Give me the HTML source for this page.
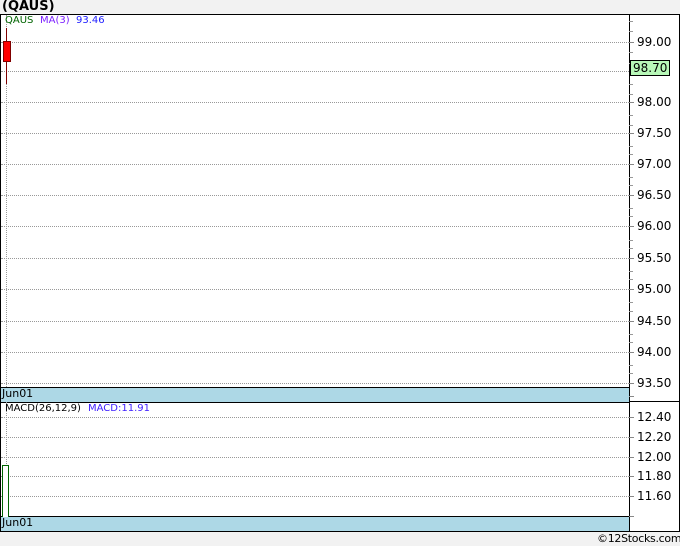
<!DOCTYPE html>
<html><head><style>
body{margin:0;width:680px;height:546px;background:#f2f2f2;position:relative;overflow:hidden;font-family:"DejaVu Sans","Liberation Sans",sans-serif;}
.a{position:absolute}
.t{position:absolute;font-size:11px;color:#000;line-height:12px}
.g{position:absolute;left:1px;width:628px;border-top:1px dotted #999;height:0}
.tk{position:absolute;left:629px;width:5px;height:1px;background:#888}
.m{position:absolute;left:629px;width:4px;height:1px;background:#999}
.y{position:absolute;left:637px;font-size:12px;line-height:12px;color:#000}
</style></head><body>
<div class="t" style="left:2px;top:0px;font-size:13px;font-weight:bold;line-height:14px">(QAUS)</div>
<div class="a" style="left:0;top:14px;width:678px;height:516px;border:1px solid #000;background:#fff"></div>
<div class="a" style="left:629px;top:14px;width:1px;height:518px;background:#000"></div>
<div class="a" style="left:1px;top:387px;width:628px;height:14px;background:#add8e6;border-top:1px solid #000;border-bottom:1px solid #000"></div>
<div class="a" style="left:629px;top:401px;width:50px;height:1px;background:#000"></div>
<div class="a" style="left:1px;top:516px;width:628px;height:14px;background:#add8e6;border-top:1px solid #000"></div>
<div class="t" style="left:2px;top:388px">Jun01</div>
<div class="t" style="left:2px;top:517px">Jun01</div>
<div class="a" style="left:6px;top:15px;width:0;height:372px;border-left:1px dotted #999"></div>
<div class="a" style="left:6px;top:402px;width:0;height:114px;border-left:1px dotted #999"></div>

<div class="g" style="top:42px"></div><div class="tk" style="top:42px"></div><div class="y" style="top:36px">99.00</div>
<div class="g" style="top:71px"></div>
<div class="g" style="top:102px"></div><div class="tk" style="top:102px"></div><div class="y" style="top:96px">98.00</div>
<div class="g" style="top:133px"></div><div class="tk" style="top:133px"></div><div class="y" style="top:127px">97.50</div>
<div class="g" style="top:164px"></div><div class="tk" style="top:164px"></div><div class="y" style="top:158px">97.00</div>
<div class="g" style="top:195px"></div><div class="tk" style="top:195px"></div><div class="y" style="top:189px">96.50</div>
<div class="g" style="top:226px"></div><div class="tk" style="top:226px"></div><div class="y" style="top:220px">96.00</div>
<div class="g" style="top:258px"></div><div class="tk" style="top:258px"></div><div class="y" style="top:252px">95.50</div>
<div class="g" style="top:289px"></div><div class="tk" style="top:289px"></div><div class="y" style="top:283px">95.00</div>
<div class="g" style="top:321px"></div><div class="tk" style="top:321px"></div><div class="y" style="top:315px">94.50</div>
<div class="g" style="top:352px"></div><div class="tk" style="top:352px"></div><div class="y" style="top:346px">94.00</div>
<div class="g" style="top:383px"></div><div class="tk" style="top:383px"></div><div class="y" style="top:377px">93.50</div>

<div class="m" style="top:21px"></div><div class="m" style="top:31px"></div><div class="m" style="top:52px"></div><div class="m" style="top:63px"></div><div class="m" style="top:84px"></div><div class="m" style="top:94px"></div><div class="m" style="top:115px"></div><div class="m" style="top:125px"></div><div class="m" style="top:146px"></div><div class="m" style="top:154px"></div><div class="m" style="top:177px"></div><div class="m" style="top:185px"></div><div class="m" style="top:208px"></div><div class="m" style="top:216px"></div><div class="m" style="top:240px"></div><div class="m" style="top:248px"></div><div class="m" style="top:271px"></div><div class="m" style="top:279px"></div><div class="m" style="top:302px"></div><div class="m" style="top:311px"></div><div class="m" style="top:334px"></div><div class="m" style="top:342px"></div><div class="m" style="top:365px"></div><div class="m" style="top:373px"></div><div class="tk" style="top:396px"></div>

<div class="g" style="top:417px"></div><div class="tk" style="top:417px"></div><div class="y" style="top:411px">12.40</div>
<div class="g" style="top:437px"></div><div class="tk" style="top:437px"></div><div class="y" style="top:431px">12.20</div>
<div class="g" style="top:457px"></div><div class="tk" style="top:457px"></div><div class="y" style="top:451px">12.00</div>
<div class="g" style="top:476px"></div><div class="tk" style="top:476px"></div><div class="y" style="top:470px">11.80</div>
<div class="g" style="top:496px"></div><div class="tk" style="top:496px"></div><div class="y" style="top:490px">11.60</div>
<div class="tk" style="top:516px"></div>

<div class="a" style="left:6px;top:28px;width:1px;height:56px;background:#800000"></div>
<div class="a" style="left:3px;top:41px;width:6px;height:19px;background:#f00;border:1px solid #800000"></div>
<div class="t" style="left:5px;top:15px;font-size:10px;color:#006400">QAUS</div>
<div class="t" style="left:40px;top:15px;font-size:10px;color:#7b1fff">MA(3)</div>
<div class="t" style="left:76px;top:15px;font-size:10px;color:#2020ff">93.46</div>
<div class="t" style="left:5px;top:403px;font-size:10px;color:#000">MACD(26,12,9)</div>
<div class="t" style="left:88px;top:403px;font-size:10px;color:#4020ff">MACD:11.91</div>
<div class="a" style="left:2px;top:465px;width:5px;height:51px;border:1px solid #006400;border-bottom:none;background:#fff"></div>
<div class="a" style="left:630px;top:60px;width:38px;height:14px;background:#b8f8b8;border:1px solid #000"></div>
<div class="t" style="left:633px;top:61px;font-size:12px;line-height:14px">98.70</div>
<div class="t" style="left:597px;top:532px;font-size:11px;line-height:13px;letter-spacing:-0.3px">©12Stocks.com</div>
</body></html>
